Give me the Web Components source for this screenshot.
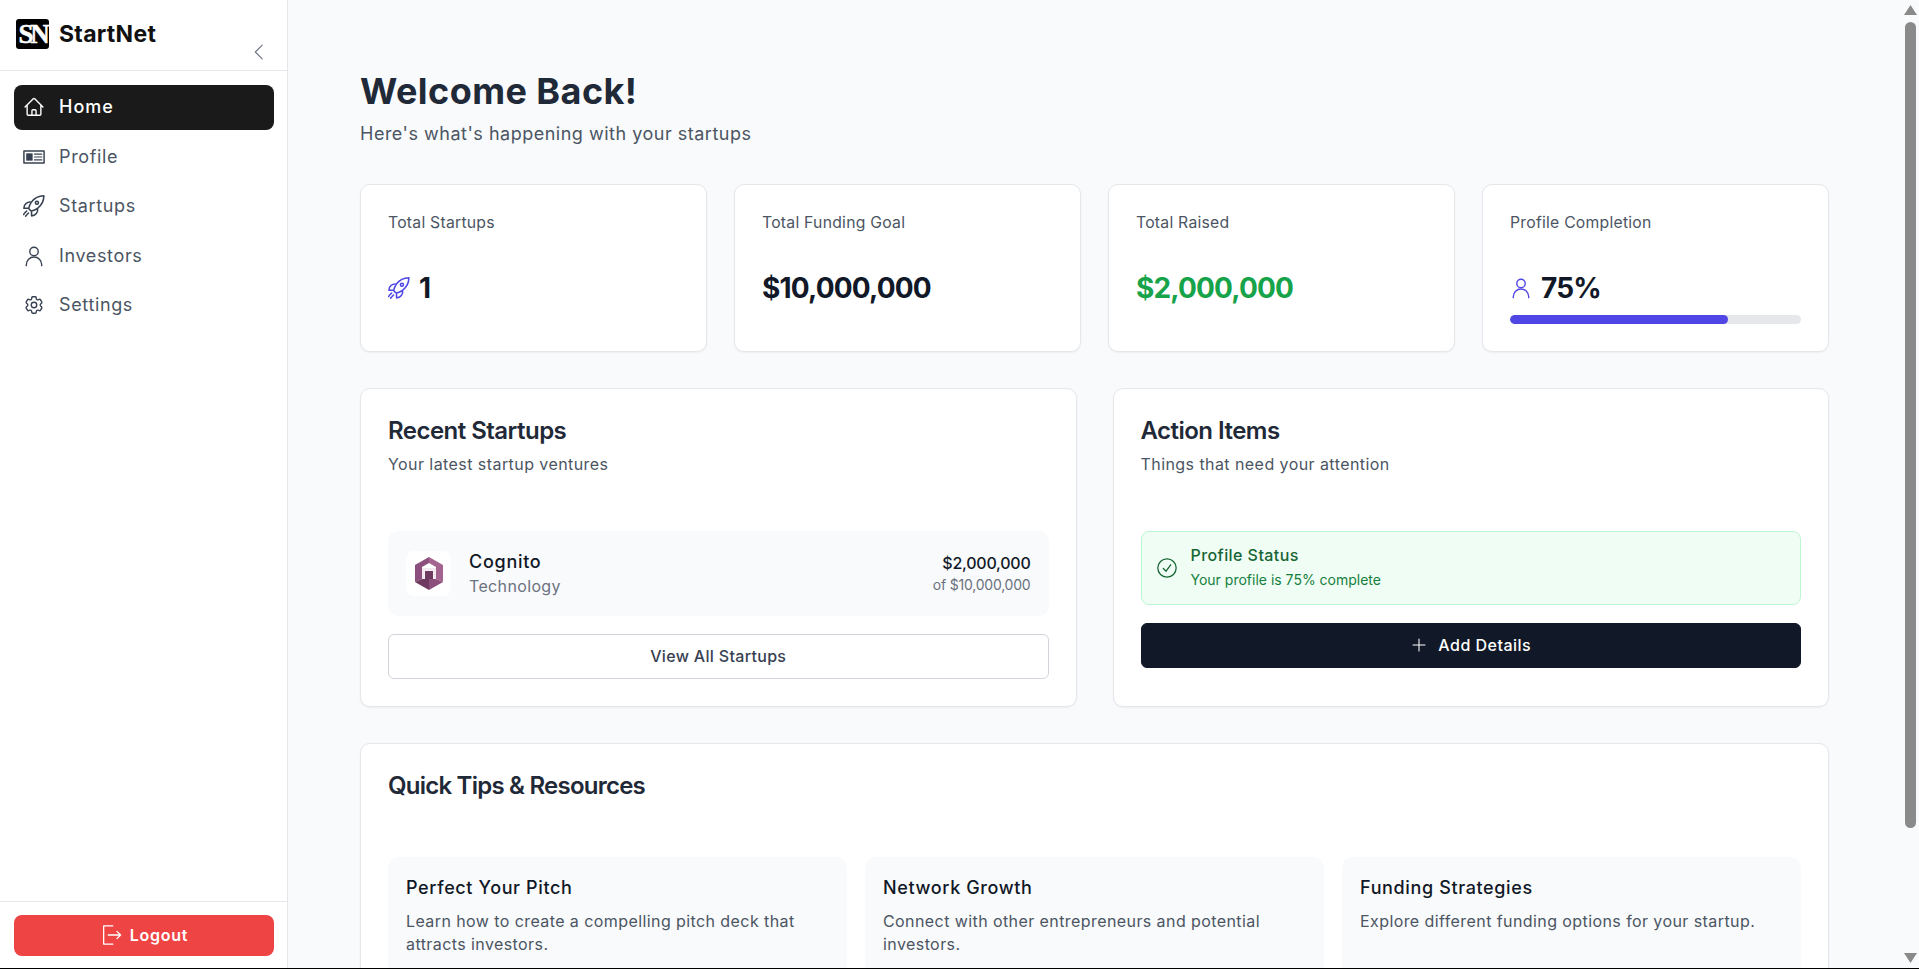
<!DOCTYPE html>
<html lang="en">
	<head>
		<meta charset="UTF-8" />
		<meta name="viewport" content="width=device-width, initial-scale=1.0" />
		<title>StartNet</title>
		<style>
			html,
			body {
				margin: 0;
				height: 969px;
				overflow: hidden;
			}
			body {
				display: flex;
				flex-direction: column;
				background: #f9fafb;
				color: #111827;
				font-family: Inter, 'Liberation Sans', sans-serif;
				letter-spacing: 0.045em;
			}
		</style>
	</head>
	<body>
		<script>
			const ICONS = {
				home: '<path d="m2.25 12 8.954-8.955c.44-.439 1.152-.439 1.591 0L21.75 12M4.5 9.75v10.125c0 .621.504 1.125 1.125 1.125H9.75v-4.875c0-.621.504-1.125 1.125-1.125h2.25c.621 0 1.125.504 1.125 1.125V21h4.125c.621 0 1.125-.504 1.125-1.125V9.75M8.25 21h8.25"/>',
				card: '<rect x="1" y="5.5" width="22" height="13" stroke-width="1.6"/><rect x="3.5" y="8" width="7" height="8" fill="currentColor" stroke="none"/><path d="M12.5 8.8h8M12.5 12h8M12.5 15.2h8" stroke-width="1.3"/>',
				rocket: '<g transform="translate(-1.6 -1.6) scale(1.12)"><path d="M15.59 14.37a6 6 0 0 1-5.84 7.38v-4.8m5.84-2.58a14.98 14.98 0 0 0 6.16-12.12A14.98 14.98 0 0 0 9.631 8.41m5.96 5.96a14.926 14.926 0 0 1-5.841 2.58m-.119-8.54a6 6 0 0 0-7.381 5.84h4.8m2.581-5.84a14.927 14.927 0 0 0-2.58 5.84m2.699 2.7c-.103.021-.207.041-.311.06a15.09 15.09 0 0 1-2.448-2.448 14.9 14.9 0 0 1 .06-.312"/><path d="M16.5 9a1.5 1.5 0 1 1-3 0 1.5 1.5 0 0 1 3 0Z"/><path d="M5 17l-2.2 2.2M6.8 19l-1.4 1.4M4 22l.8-.8M2 20.5l.5-.5"/></g>',
				user: '<circle cx="12" cy="7" r="4.6"/><path d="M3.6 22.5v-1a8.4 8.4 0 0 1 16.8 0v1"/>',
				gear: '<path d="M9.594 3.94c.09-.542.56-.94 1.11-.94h2.593c.55 0 1.02.398 1.11.94l.213 1.281c.063.374.313.686.645.87.074.04.147.083.22.127.325.196.72.257 1.075.124l1.217-.456a1.125 1.125 0 0 1 1.37.49l1.296 2.247a1.125 1.125 0 0 1-.26 1.431l-1.003.827c-.293.241-.438.613-.43.992a7.723 7.723 0 0 1 0 .255c-.008.378.137.75.43.991l1.004.827c.424.35.534.955.26 1.43l-1.298 2.247a1.125 1.125 0 0 1-1.369.491l-1.217-.456c-.355-.133-.75-.072-1.076.124a6.47 6.47 0 0 1-.22.128c-.331.183-.581.495-.644.869l-.213 1.281c-.09.543-.56.94-1.11.94h-2.594c-.55 0-1.019-.398-1.11-.94l-.213-1.281c-.062-.374-.312-.686-.644-.87a6.52 6.52 0 0 1-.22-.127c-.325-.196-.72-.257-1.076-.124l-1.217.456a1.125 1.125 0 0 1-1.369-.49l-1.297-2.247a1.125 1.125 0 0 1 .26-1.431l1.004-.827c.292-.24.437-.613.43-.991a6.932 6.932 0 0 1 0-.255c.007-.38-.138-.751-.43-.992l-1.004-.827a1.125 1.125 0 0 1-.26-1.43l1.297-2.247a1.125 1.125 0 0 1 1.37-.491l1.216.456c.356.133.751.072 1.076-.124.072-.044.146-.086.22-.128.332-.183.582-.495.644-.869l.214-1.28Z"/><path d="M15 12a3 3 0 1 1-6 0 3 3 0 0 1 6 0Z"/>',
				logout: '<path d="M14 2H4v20h10"/><path d="M9 12h13.5M18.5 8l4 4-4 4"/>',
				plus: '<path d="M12 4v16M4 12h16"/>',
				check: '<circle cx="12" cy="12" r="10"/><path d="m8 12.5 3 3 5-7"/>',
				chevron: '<path d="M15.5 4.5 8 12l7.500 7.500"/>',
			};

			customElements.define(
				'app-icon',
				class extends HTMLElement {
					connectedCallback() {
						const size = this.getAttribute('size') || 22;
						const stroke = this.getAttribute('stroke') || 1.5;
						this.attachShadow({ mode: 'open' });
						this.shadowRoot.innerHTML = `
							<style>
								:host { display: inline-flex; flex: none; }
								svg { display: block; }
							</style>
							<svg width="${size}" height="${size}" viewBox="0 0 24 24" fill="none" stroke="currentColor" stroke-width="${stroke}" stroke-linecap="round" stroke-linejoin="round">${ICONS[this.getAttribute('name')]}</svg>
						`;
					}
				},
			);

			customElements.define(
				'nav-item',
				class extends HTMLElement {
					connectedCallback() {
						this.attachShadow({ mode: 'open' });
						this.shadowRoot.innerHTML = `
							<style>
								:host {
									display: flex;
									align-items: center;
									gap: 14px;
									box-sizing: border-box;
									height: 45px;
									padding: 0 0 1px 9px;
									border-radius: 8px;
									color: #4b5563;
									font-size: 18px;
									letter-spacing: 0.035em;
								}
								:host([active]) {
									background: #1a1a1a;
									color: #fff;
									font-weight: 500;
									letter-spacing: 0.055em;
								}
								span { margin-top: -1px; }
								app-icon { color: #374151; }
								:host([active]) app-icon { color: #fff; }
							</style>
							<app-icon name="${this.getAttribute('icon')}"></app-icon>
							<span><slot></slot></span>
						`;
					}
				},
			);

			customElements.define(
				'side-bar',
				class extends HTMLElement {
					connectedCallback() {
						this.attachShadow({ mode: 'open' });
						this.shadowRoot.innerHTML = `
							<style>
								:host {
									display: flex;
									flex-direction: column;
									flex: none;
									box-sizing: border-box;
									width: 288px;
									background: #fff;
									border-right: 1px solid #e5e7eb;
								}
								header {
									display: flex;
									align-items: flex-start;
									box-sizing: border-box;
									height: 71px;
									padding: 19px 17px 0 16px;
									border-bottom: 1px solid #e5e7eb;
								}
								.logo {
									display: flex;
									align-items: center;
									justify-content: center;
									width: 33px;
									height: 30px;
									border-radius: 3px;
									background: #000;
									color: #fff;
									font: 700 27px/30px 'Liberation Serif', serif;
									letter-spacing: -0.12em;
									-webkit-text-stroke: 0.5px #fff;
								}
								.brand {
									margin-left: 10px;
									font-size: 23px;
									line-height: 30px;
									font-weight: 700;
									color: #111;
									letter-spacing: 0.012em;
								}
								header app-icon {
									margin: 22px 0 0 auto;
									color: #6b7280;
								}
								nav {
									display: flex;
									flex-direction: column;
									gap: 4.5px;
									padding: 14px 13px 14px 14px;
								}
								footer {
									margin-top: auto;
									padding: 13px 13px 12px 14px;
									border-top: 1px solid #e5e7eb;
								}
								.logout {
									display: flex;
									align-items: center;
									justify-content: center;
									gap: 8px;
									box-sizing: border-box;
									height: 41px;
									padding-bottom: 2px;
									border-radius: 8px;
									background: #ef4444;
									color: #fff;
									font-size: 16px;
									font-weight: 600;
									letter-spacing: 0.045em;
								}
								.logout app-icon { color: #fff; }
							</style>
							<header>
								<div class="logo">SN</div>
								<div class="brand">StartNet</div>
								<app-icon name="chevron" size="22" stroke="1.2"></app-icon>
							</header>
							<nav><slot></slot></nav>
							<footer>
								<div class="logout"><app-icon name="logout" size="22" stroke="1.4"></app-icon>Logout</div>
							</footer>
						`;
					}
				},
			);

			customElements.define(
				'stat-card',
				class extends HTMLElement {
					connectedCallback() {
						this.attachShadow({ mode: 'open' });
						this.shadowRoot.innerHTML = `
							<style>
								:host {
									display: block;
									box-sizing: border-box;
									padding: 27px;
									background: #fff;
									border: 1px solid #e5e7eb;
									border-radius: 10px;
									box-shadow: 0 1px 2px rgba(0, 0, 0, 0.05);
								}
								.label {
									padding-top: 1px;
									font-size: 15.75px;
									line-height: 20px;
									color: #4b5563;
									letter-spacing: 0.015em;
								}
								.value {
									display: flex;
									align-items: center;
									gap: 9px;
									margin-top: 37px;
									font-size: 28px;
									line-height: 36px;
									font-weight: 700;
									letter-spacing: -0.03em;
									color: var(--value-color, #111827);
								}
								app-icon { color: #4f46e5; }
							</style>
							<div class="label">${this.getAttribute('label')}</div>
							<div class="value">
								<slot name="icon"></slot>
								<slot></slot>
							</div>
							<slot name="extra"></slot>
						`;
					}
				},
			);

			customElements.define(
				'progress-bar',
				class extends HTMLElement {
					connectedCallback() {
						this.attachShadow({ mode: 'open' });
						this.shadowRoot.innerHTML = `
							<style>
								:host {
									display: block;
									height: 9px;
									margin-top: 9px;
									border-radius: 5px;
									background: #e5e7eb;
									overflow: hidden;
								}
								div {
									height: 100%;
									border-radius: 5px;
									background: #4f46e5;
								}
							</style>
							<div style="width: ${this.getAttribute('value')}%"></div>
						`;
					}
				},
			);

			customElements.define(
				'panel-card',
				class extends HTMLElement {
					connectedCallback() {
						const sub = this.getAttribute('sub');
						this.attachShadow({ mode: 'open' });
						this.shadowRoot.innerHTML = `
							<style>
								:host {
									display: flex;
									flex-direction: column;
									box-sizing: border-box;
									padding: 26px 27px 27px;
									background: #fff;
									border: 1px solid #e5e7eb;
									border-radius: 10px;
									box-shadow: 0 1px 2px rgba(0, 0, 0, 0.05);
								}
								h2 {
									margin: 0;
									font-size: 24px;
									line-height: 32px;
									font-weight: 600;
									color: #1f2937;
									letter-spacing: var(--heading-spacing, -0.022em);
								}
								p {
									margin: 5px 0 0;
									font-size: 16px;
									line-height: 24px;
									color: #4b5563;
									letter-spacing: 0.027em;
								}
								.body {
									display: flex;
									flex-direction: column;
									gap: 18px;
									margin-top: 55px;
								}
							</style>
							<h2>${this.getAttribute('heading')}</h2>
							${sub ? `<p>${sub}</p>` : ''}
							<div class="body"><slot></slot></div>
						`;
					}
				},
			);

			customElements.define(
				'startup-row',
				class extends HTMLElement {
					connectedCallback() {
						this.attachShadow({ mode: 'open' });
						this.shadowRoot.innerHTML = `
							<style>
								:host {
									display: flex;
									align-items: center;
									height: 85px;
									padding: 0 18px;
									border-radius: 10px;
									background: #f9fafb;
								}
								.logo {
									display: flex;
									align-items: center;
									justify-content: center;
									width: 45px;
									height: 45px;
									margin-right: 18px;
									border-radius: 8px;
									background: #fff;
								}
								.name {
									font-size: 18px;
									line-height: 24px;
									font-weight: 500;
									color: #111827;
									letter-spacing: 0.04em;
								}
								.tag {
									font-size: 16px;
									line-height: 24px;
									color: #6b7280;
									letter-spacing: 0.022em;
								}
								.money {
									margin-left: auto;
									padding-bottom: 2px;
									text-align: right;
								}
								.raised {
									font-size: 16px;
									line-height: 24px;
									font-weight: 500;
									color: #111827;
									letter-spacing: -0.015em;
								}
								.goal {
									font-size: 14px;
									line-height: 20px;
									color: #6b7280;
									letter-spacing: -0.015em;
								}
							</style>
							<div class="logo"><slot name="logo"></slot></div>
							<div>
								<div class="name">${this.getAttribute('name')}</div>
								<div class="tag">${this.getAttribute('tag')}</div>
							</div>
							<div class="money">
								<div class="raised">${this.getAttribute('raised')}</div>
								<div class="goal">${this.getAttribute('goal')}</div>
							</div>
						`;
					}
				},
			);

			customElements.define(
				'status-note',
				class extends HTMLElement {
					connectedCallback() {
						this.attachShadow({ mode: 'open' });
						this.shadowRoot.innerHTML = `
							<style>
								:host {
									display: flex;
									align-items: center;
									gap: 13px;
									height: 74px;
									box-sizing: border-box;
									padding-left: 14px;
									background: #f0fdf4;
									border: 1px solid #bbf7d0;
									border-radius: 8px;
								}
								app-icon { color: #166534; }
								.title {
									margin-top: -3px;
									font-size: 16px;
									line-height: 24px;
									font-weight: 500;
									color: #166534;
									letter-spacing: 0.027em;
								}
								.text {
									margin-top: 3px;
									font-size: 14px;
									line-height: 20px;
									color: #15803d;
									letter-spacing: 0;
								}
							</style>
							<app-icon name="check" size="22" stroke="1.4"></app-icon>
							<div>
								<div class="title">${this.getAttribute('heading')}</div>
								<div class="text"><slot></slot></div>
							</div>
						`;
					}
				},
			);

			customElements.define(
				'action-button',
				class extends HTMLElement {
					connectedCallback() {
						this.attachShadow({ mode: 'open' });
						this.shadowRoot.innerHTML = `
							<style>
								:host {
									display: flex;
									align-items: center;
									justify-content: center;
									gap: 10px;
									box-sizing: border-box;
									height: 45px;
									padding-bottom: 2px;
									border: 1px solid #d1d5db;
									border-radius: 6px;
									background: #fff;
									color: #374151;
									font-size: 16px;
									font-weight: 500;
									letter-spacing: 0.02em;
								}
								:host([primary]) {
									background: #111827;
									border-color: #111827;
									color: #fff;
									letter-spacing: 0.03em;
								}
								app-icon { color: #d1d5db; }
							</style>
							<slot name="icon"></slot>
							<slot></slot>
						`;
					}
				},
			);

			customElements.define(
				'tip-card',
				class extends HTMLElement {
					connectedCallback() {
						this.attachShadow({ mode: 'open' });
						this.shadowRoot.innerHTML = `
							<style>
								:host {
									display: block;
									padding: 17px 18px 27px;
									border-radius: 10px;
									background: #f9fafb;
								}
								h3 {
									margin: 0;
									font-size: 18px;
									line-height: 28px;
									font-weight: 500;
									color: #111827;
									letter-spacing: 0.035em;
								}
								p {
									margin: 8px 0 0;
									font-size: 16px;
									line-height: 22.5px;
									color: #4b5563;
									letter-spacing: 0.026em;
								}
							</style>
							<h3>${this.getAttribute('heading')}</h3>
							<p><slot></slot></p>
						`;
					}
				},
			);

			customElements.define(
				'page-scrollbar',
				class extends HTMLElement {
					connectedCallback() {
						this.attachShadow({ mode: 'open' });
						this.shadowRoot.innerHTML = `
							<style>
								:host {
									display: flex;
									flex-direction: column;
									align-items: center;
									flex: none;
									box-sizing: border-box;
									width: 17px;
									padding: 5px 0;
									background: #f9fafb;
								}
								.arrow {
									width: 13px;
									height: 10px;
									background: #8a8a8a;
									clip-path: polygon(50% 0, 100% 100%, 0 100%);
								}
								.arrow.down { transform: rotate(180deg); }
								.thumb {
									width: 11px;
									height: 806px;
									margin: 7px 0 auto;
									border-radius: 6px;
									background: #8a8a8a;
								}
							</style>
							<div class="arrow"></div>
							<div class="thumb"></div>
							<div class="arrow down"></div>
						`;
					}
				},
			);

			customElements.define(
				'dash-board',
				class extends HTMLElement {
					connectedCallback() {
						this.attachShadow({ mode: 'open' });
						this.shadowRoot.innerHTML = `
							<style>
								:host {
									display: block;
									flex: 1;
									min-width: 0;
									padding: 71px 73px 0 72px;
									overflow: hidden;
								}
								h1 {
									margin: 0;
									font-size: 36px;
									line-height: 40px;
									font-weight: 700;
									color: #1f2937;
									letter-spacing: 0.012em;
								}
								.sub {
									margin: 11px 0 0;
									font-size: 18px;
									line-height: 24px;
									color: #4b5563;
									letter-spacing: 0.028em;
								}
								.stats {
									display: grid;
									grid-template-columns: repeat(4, 1fr);
									gap: 27px;
									margin-top: 38px;
								}
								.panels {
									display: grid;
									grid-template-columns: 1fr 1fr;
									gap: 36px;
									margin-top: 36px;
								}
								.tips { margin-top: 36px; }
							</style>
							<h1>Welcome Back!</h1>
							<p class="sub">Here's what's happening with your startups</p>
							<div class="stats"><slot name="stats"></slot></div>
							<div class="panels"><slot name="panels"></slot></div>
							<div class="tips"><slot name="tips"></slot></div>
						`;
					}
				},
			);

			customElements.define(
				'tip-grid',
				class extends HTMLElement {
					connectedCallback() {
						this.attachShadow({ mode: 'open' });
						this.shadowRoot.innerHTML = `
							<style>
								:host {
									display: grid;
									grid-template-columns: repeat(3, 1fr);
									gap: 18px;
								}
							</style>
							<slot></slot>
						`;
					}
				},
			);

			customElements.define(
				'app-shell',
				class extends HTMLElement {
					connectedCallback() {
						this.attachShadow({ mode: 'open' });
						this.shadowRoot.innerHTML = `
							<style>
								:host {
									display: flex;
									height: 968px;
									flex: none;
								}
							</style>
							<slot></slot>
						`;
					}
				},
			);
		</script>

		<app-shell>
			<side-bar>
				<nav-item icon="home" active>Home</nav-item>
				<nav-item icon="card">Profile</nav-item>
				<nav-item icon="rocket">Startups</nav-item>
				<nav-item icon="user">Investors</nav-item>
				<nav-item icon="gear">Settings</nav-item>
			</side-bar>

			<dash-board>
				<stat-card slot="stats" label="Total Startups">
					<app-icon slot="icon" name="rocket" size="22" style="color: #4f46e5"></app-icon>
					1
				</stat-card>
				<stat-card slot="stats" label="Total Funding Goal">$10,000,000</stat-card>
				<stat-card slot="stats" label="Total Raised" style="--value-color: #16a34a">$2,000,000</stat-card>
				<stat-card slot="stats" label="Profile Completion">
					<app-icon slot="icon" name="user" size="22" style="color: #4f46e5"></app-icon>
					75%
					<progress-bar slot="extra" value="75"></progress-bar>
				</stat-card>

				<panel-card slot="panels" heading="Recent Startups" sub="Your latest startup ventures">
					<startup-row name="Cognito" tag="Technology" raised="$2,000,000" goal="of $10,000,000">
						<!-- cognito mark: thick outer walls, narrow pale frame, dark core -->
						<svg slot="logo" width="28" height="33" viewBox="0 0 28 33">
							<path fill="#8c4f7d" d="M14 0v6L7 10v12L0 25V8z" />
							<path fill="#a3658f" d="M14 0l14 8v17l-7-3V10l-7-4z" />
							<path fill="#6f3a60" d="M0 25l7-3h7v11z" />
							<path fill="#8c4f7d" d="M14 33V22h7l7 3z" />
							<path fill="#f3e8f0" d="M7 11h14v11h-2.500v-8.500h-9V22H7z" />
							<path fill="#6f3a60" d="M10 14h8v8h-8z" />
						</svg>
					</startup-row>
					<action-button>View All Startups</action-button>
				</panel-card>

				<panel-card slot="panels" heading="Action Items" sub="Things that need your attention">
					<status-note heading="Profile Status">Your profile is 75% complete</status-note>
					<action-button primary>
						<app-icon slot="icon" name="plus" size="18" stroke="1.4"></app-icon>
						Add Details
					</action-button>
				</panel-card>

				<panel-card slot="tips" heading="Quick Tips &amp; Resources" style="--heading-spacing: -0.032em">
					<tip-grid>
						<tip-card heading="Perfect Your Pitch">Learn how to create a compelling pitch deck that attracts investors.</tip-card>
						<tip-card heading="Network Growth">Connect with other entrepreneurs and potential investors.</tip-card>
						<tip-card heading="Funding Strategies">Explore different funding options for your startup.</tip-card>
					</tip-grid>
				</panel-card>
			</dash-board>

			<page-scrollbar></page-scrollbar>
		</app-shell>
		<div style="height: 1px; background: #000"></div>
	</body>
</html>
